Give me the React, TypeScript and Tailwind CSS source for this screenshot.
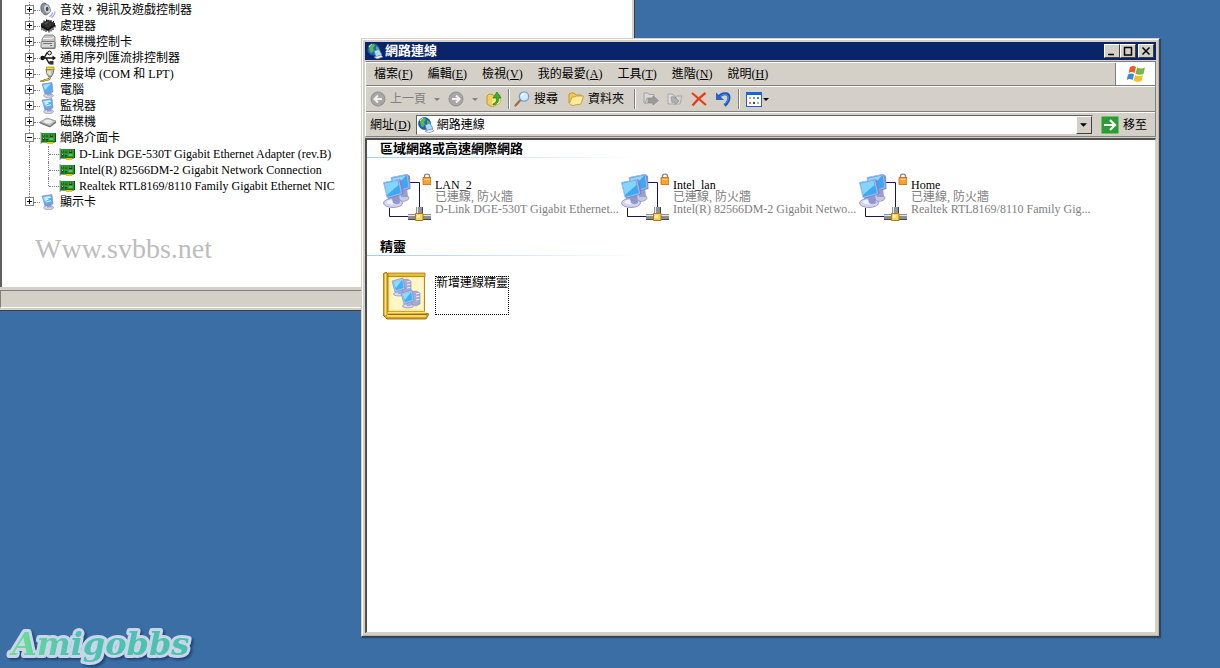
import React from 'react';

type IconProps = { className?: string };

const Svg: React.FC<{ box: string; className?: string; children: React.ReactNode }> = ({ box, className = 'w-4 h-4', children }) => (
  <svg viewBox={box} className={`shrink-0 ${className}`} aria-hidden="true">
    {children}
  </svg>
);

/* ---------- Device tree icons ---------- */

const SpeakerIcon = () => (
  <Svg box="0 0 16 16">
    <ellipse cx="5" cy="7" rx="4" ry="6" fill="#8c8f9c" stroke="#5c5f6e" strokeWidth=".8" transform="rotate(-15 5 7)" />
    <ellipse cx="7" cy="7" rx="3.2" ry="4.6" fill="#d5d7e0" stroke="#777a88" strokeWidth=".8" transform="rotate(-15 7 7)" />
    <ellipse cx="7.2" cy="7" rx="1.4" ry="2.2" fill="#44475a" />
    <path d="M9 14.5c2-.5 3.4-2 3.6-4M11 15.5c2-.7 3.8-2.8 4-6" fill="none" stroke="#9d9ee8" strokeWidth="1.2" />
  </Svg>
);

const ChipIcon = () => (
  <Svg box="0 0 16 16">
    <path d="M1 6l7-4 7 3.500-7 5z" fill="#333" stroke="#000" strokeWidth=".6" />
    <path d="M1 6v3l7 4 7-5V5.500l-7 5z" fill="#111" />
    <path d="M2 9v3M4 10v3M6 11v3M9 12v2.500M11 10.500v3M13 9v3M15 7v2.500M4 4V2.500M6.500 3V1.500M11 3.500V2M13.500 4.500V3" stroke="#000" />
    <path d="M5 6l3-2" stroke="#888" strokeWidth=".7" />
  </Svg>
);

const FloppyIcon = () => (
  <Svg box="0 0 16 16">
    <path d="M2 5l3-4h8l2 2v6l-2 2H2z" fill="#c4c4c4" stroke="#777" strokeWidth=".8" />
    <path d="M3 4.500h9l2-1.500" stroke="#f4f4f4" fill="none" />
    <rect x="1" y="7.500" width="14" height="6.500" rx="1" fill="#d6d6d6" stroke="#666" strokeWidth=".8" />
    <path d="M3 9.500h9" stroke="#777" />
    <path d="M2 14.500h13V9" stroke="#777" fill="none" />
    <rect x="10" y="11" width="2" height="1" fill="#32a032" />
  </Svg>
);

const UsbIcon = () => (
  <Svg box="0 0 16 16">
    <path d="M1 8h13M4 8l3-5h2M6 8l3 5h2" fill="none" stroke="#111" strokeWidth="1.4" />
    <circle cx="2.500" cy="8" r="2.200" fill="#111" />
    <circle cx="9.500" cy="3" r="1.900" fill="#eee" stroke="#111" />
    <rect x="9.500" y="11" width="4" height="3.600" fill="#333" />
    <path d="M12.500 5.500L16 8l-3.500 2.500z" fill="#111" />
  </Svg>
);

const PortIcon = () => (
  <Svg box="0 0 16 16">
    <path d="M6 3h8l-1 5-2 3H9L7 8z" fill="#bdbdbd" stroke="#555" strokeWidth=".8" />
    <path d="M6.500 1h7.500v2.500H6.500z" fill="#f5dc28" stroke="#8d7600" strokeWidth=".6" />
    <path d="M8 5v3M10 5v4" stroke="#fff" />
    <path d="M10 11c0 4-4 2-5 3s-2 1.500-4.500.8" fill="none" stroke="#6e6120" strokeWidth="2" />
    <path d="M10 11c0 4-4 2-5 3s-2 1.500-4.500.8" fill="none" stroke="#e8d46a" />
  </Svg>
);

const MonitorIcon: React.FC<{ pane?: boolean }> = ({ pane }) => (
  <Svg box="0 0 16 16">
    <ellipse cx="8.500" cy="13.600" rx="5" ry="2" fill="#d6d8ea" stroke="#8487a8" strokeWidth=".6" />
    <path d="M7 10h4l1 3.500H7z" fill="#9ea2c6" />
    <path d="M2 2l10-1.500L13 10l-8 2z" fill="#8a9ad6" stroke="#6b7cc0" strokeWidth=".5" />
    <path d="M3 3l8-1.400 1 7.400L5 10.500z" fill="#49b4f6" />
    <path d="M3 3l8-1.400L5 8z" fill="#a8e0ff" />
    {pane && <path d="M5 4.200l6-1M5.500 6l3-.6M6 8l5-1.300" stroke="#e9fbff" />}
  </Svg>
);

const DiskIcon = () => (
  <Svg box="0 0 16 16">
    <path d="M0 8l7-4 9 3-6 5z" fill="#c9c9c9" stroke="#777" strokeWidth=".6" />
    <path d="M0 8l10 4v1.500L0 9.500zM10 12l6-5v2l-6 4.500z" fill="#777" />
    <ellipse cx="8" cy="7.500" rx="4" ry="1.800" fill="#ececec" />
  </Svg>
);

const NicIcon = () => (
  <Svg box="0 0 16 16">
    <path d="M1 3h14v9H1z" fill="#28962c" />
    <path d="M1 2v12" stroke="#9a9a9a" />
    <path d="M1 12h14M15.500 3v9" stroke="#0d5012" />
    <path d="M2.500 4.500h2v2h-2zM2.500 8h2v2.500h-2zM6 4.500h2v2H6zM6 8h2v2.500H6zM10 4h3v3h-3z" fill="#0b3f10" />
    <path d="M3 5h1M6.500 5h1M3 8.500h1M6.500 8.500h1M10.500 5h2M9.500 9h4" stroke="#8ff08a" />
    <path d="M7 12h6v2H7z" fill="#e3c81c" />
  </Svg>
);

/* ---------- Network window icons ---------- */

const GlobeIcon = () => (
  <Svg box="0 0 16 16">
    <circle cx="6.500" cy="6.500" r="6" fill="#1f63c4" stroke="#12408a" strokeWidth=".7" />
    <path d="M2 4c1-2.500 3-3 5-3l1 2-2 2 1 2-2 3-2-1zM9 3l3 2v4l-3-2z" fill="#58b947" />
    <path d="M2 4c1-2 2-2.500 3-2.700" stroke="#d8f4ff" fill="none" />
    <path d="M7 8l5-2 3 6-6 2z" fill="#a8dcff" stroke="#5472a8" strokeWidth=".7" />
    <path d="M7 14l7-2 2 2-6 2z" fill="#e9eaf2" stroke="#777c94" strokeWidth=".6" />
  </Svg>
);

const FlagIcon = () => (
  <Svg box="0 0 20 18" className="w-5 h-[18px]">
    <path d="M4 2c2-1.300 4-1.300 6 0L8.500 8c-2-1.200-4-1.200-6 0z" fill="#ea5a2c" />
    <path d="M11 2.500c2 1.200 5 1.200 8 0L17.500 9c-3 1.200-5.500 1-8-.3z" fill="#77b843" />
    <path d="M2 9.500c2-1.300 4-1.300 6 0L6.700 15c-2-1.200-4-1.200-6 0z" fill="#3f86df" />
    <path d="M9 10c2.500 1.300 5 1.300 8 .3L15.500 16c-3 1.200-5.500 1-8-.5z" fill="#f7c02a" />
  </Svg>
);

const ArrowDisc: React.FC<{ back?: boolean }> = ({ back }) => (
  <Svg box="0 0 16 16">
    <circle cx="8" cy="8" r="7" fill="#a6a6a6" stroke="#8f8f8f" />
    <path d={back ? 'M12 8H5M8 4.500L4.500 8 8 11.500' : 'M4 8h7M8 4.500l3.500 3.500L8 11.500'} fill="none" stroke="#f2f2f2" strokeWidth="2" />
  </Svg>
);

const UpFolderIcon = () => (
  <Svg box="0 0 16 16">
    <path d="M1 5l2-2 4 .5 1 1.500 6-1v8l-8 4-5-3z" fill="#f3cf55" stroke="#b98a1c" strokeWidth=".8" />
    <path d="M6 8l8-3v7l-8 3.500z" fill="#fbe58c" />
    <path d="M7 13c3-1 4-3 3.500-6H7L11 1l4 6h-2.500c.5 4-2 7-5.500 7z" fill="#3eb134" stroke="#1c7a1c" strokeWidth=".7" />
  </Svg>
);

const SearchIcon = () => (
  <Svg box="0 0 16 16">
    <path d="M1.500 14.500L6 9.500" stroke="#a6693f" strokeWidth="2.200" strokeLinecap="round" />
    <circle cx="10" cy="5.500" r="4.700" fill="#d3ecfd" stroke="#6d9ed8" strokeWidth="1.300" />
    <path d="M7.500 5c.3-1.500 1.200-2 2.500-2" stroke="#fff" strokeWidth="1.300" fill="none" />
  </Svg>
);

const FolderIcon = () => (
  <Svg box="0 0 16 16">
    <path d="M1 12V3l2-1h3l2 2h5v3" fill="#f2c94c" stroke="#c2922a" strokeWidth=".9" />
    <path d="M1.500 12.500L4 6h3l1-1h7.500L13 13 4 14.500z" fill="#fdeb9d" stroke="#c79a2c" strokeWidth=".9" />
  </Svg>
);

const MoveIcon = () => (
  <Svg box="0 0 16 16">
    <path d="M1 2h4l1 1.500h5V12H1z" fill="#d9d9d9" stroke="#a2a2a2" />
    <path d="M2 13l2-6h9" fill="none" stroke="#a2a2a2" />
    <path d="M5 7.500h5V5l5.500 4.500L10 14v-2.500H5z" fill="#9a9a9a" stroke="#858585" strokeWidth=".6" />
  </Svg>
);

const CopyIcon = () => (
  <Svg box="0 0 16 16">
    <path d="M1 3h4l4 3v7H1z" fill="#ddd" stroke="#a8a8a8" />
    <path d="M9 5h6l-2 8H8z" fill="#d2d2d2" stroke="#aaa" />
    <path d="M4 6c3-1.500 4 0 4 1.500V6l4 4-4 3.500V11c-1 0-2 0-3 1z" fill="#b0b0b0" stroke="#8d8d8d" strokeWidth=".6" />
  </Svg>
);

const DeleteIcon = () => (
  <Svg box="0 0 16 16">
    <path d="M1 2c5 4 9 8 14 12M14.500 2C9 6 5 10 1.500 14.500" fill="none" stroke="#e63b17" strokeWidth="2.200" />
  </Svg>
);

const UndoIcon = () => (
  <Svg box="0 0 16 16">
    <path d="M3 7C7 1 14 1.500 14 6.500c0 3.500-2 6-4.500 8" fill="none" stroke="#1d56b8" strokeWidth="3" />
    <path d="M3.500 7C7 2.500 13 2 13.500 6.500c0 3-1.500 5-4 7" fill="none" stroke="#4b90ea" />
    <path d="M1 1.500V9h8z" fill="#2565c8" />
  </Svg>
);

const ViewsIcon = () => (
  <Svg box="0 0 16 15" className="w-4 h-[15px]">
    <rect x=".5" y=".5" width="15" height="14" fill="#fff" stroke="#1a63d0" />
    <path d="M0 0h16v3H0z" fill="#1a63d0" />
    <path d="M3 5h2v2H3z" fill="#c8b4a0" />
    <path d="M7 5h2v2H7z" fill="#7b8fd0" />
    <path d="M11 5h2v2h-2z" fill="#3ba83b" />
    <path d="M3 10h2v2H3z" fill="#e27b4d" />
    <path d="M7 10h2v2H7z" fill="#1549a8" />
    <path d="M11 10h2v2h-2z" fill="#e8a93a" />
  </Svg>
);

const GoIcon = () => (
  <Svg box="0 0 18 18" className="w-[18px] h-[18px]">
    <rect x=".5" y=".5" width="17" height="17" rx="1" fill="#2d9c36" stroke="#6cc070" />
    <path d="M3 9h11M9 4l5 5-5 5" fill="none" stroke="#fff" strokeWidth="2.200" />
  </Svg>
);

const Caret: React.FC<IconProps> = ({ className = 'w-1.5 h-[3px]' }) => (
  <Svg box="0 0 6 3" className={className}>
    <path d="M0 0h6L3 3z" fill="currentColor" />
  </Svg>
);

const LanIcon = () => (
  <Svg box="0 0 48 48" className="w-12 h-12">
    <path d="M26 9.500h10.500V35M6.500 35v8.500H26" fill="none" stroke="#1c1060" />
    {/* rear monitor */}
    <ellipse cx="19" cy="25" rx="7" ry="3.500" fill="#c6c9e6" stroke="#777ba8" strokeWidth=".6" />
    <path d="M17 16l7-2 1 10h-7z" fill="#9a9ecf" />
    <path d="M8 4.500L24 1l3 2 .5 13L12 20z" fill="#7f8fd2" />
    <path d="M8 4.500L24 1.500l2 13L12 19z" fill="#3ea6f2" stroke="#a9b6e6" />
    <path d="M9 5.500L23 2.500 13 14z" fill="#90d6ff" />
    {/* front monitor */}
    <ellipse cx="10" cy="30" rx="9.500" ry="4.500" fill="#d3d5ee" stroke="#7a7eaa" strokeWidth=".7" />
    <ellipse cx="9" cy="29" rx="5.500" ry="2.200" fill="#f0f1fb" />
    <path d="M8 22l8-2 1 10c-2 1.500-5 1.500-7 0z" fill="#9296cc" />
    <path d="M.5 9.500L16 6l3 2 1.500 13L5 26z" fill="#7787d0" />
    <path d="M.5 9.500L15.500 6.500 18.500 20.500 4 24.500z" fill="#3aaaf5" stroke="#b1bdea" />
    <path d="M1.500 10.500L14.500 7.500 15.500 12 4 22z" fill="#84d4ff" />
    {/* cable */}
    <path d="M25 41h23v6H25z" fill="#8b8f94" />
    <path d="M25 42.500h23" stroke="#e4e6e8" />
    <path d="M25 46.500h23" stroke="#45484c" />
    <path d="M33 34h7v7h-7z" fill="#909498" />
    <path d="M34.500 34v7" stroke="#e8e8e8" />
    <path d="M39.500 34v7" stroke="#44474a" />
    <path d="M32.500 40.500h7.500v7h-7.500z" fill="#ffd553" stroke="#a87b12" />
    <path d="M34 42h3v3h-3z" fill="#fff3b5" />
    {/* lock */}
    <path d="M41.500 5V3c0-2.500 5-2.500 5 0v2" fill="none" stroke="#85858a" strokeWidth="1.400" />
    <path d="M40 4.500h8v7h-8z" fill="#f9a234" stroke="#bd6a10" strokeWidth=".8" />
    <path d="M41.500 6.500h5" stroke="#ffd795" />
  </Svg>
);

const MiniPc: React.FC<{ x: number; y: number }> = ({ x, y }) => (
  <g transform={`translate(${x} ${y})`}>
    <path d="M11 2l5-1 4 2v11l-4 2-5-2z" fill="#a7abd0" stroke="#8387b2" strokeWidth=".6" />
    <path d="M16 4l3.500-.8M16 7l3.500-.8M16 10l3.500-.8" stroke="#eceefb" />
    <ellipse cx="8" cy="16" rx="5.500" ry="2" fill="#d5d8ee" stroke="#7c80aa" strokeWidth=".6" />
    <path d="M6 12l5-1v5H7z" fill="#a7abd8" />
    <path d="M1 3l11-3 2 11-10 3z" fill="#b4c3ee" stroke="#7f8fce" strokeWidth=".7" />
    <path d="M2.300 4l8.800-2.300L12.600 10 5 12.200z" fill="#39b4fa" />
    <path d="M2.300 4l8.800-2.300L5 10z" fill="#8fdcff" />
  </g>
);

const WizardIcon = () => (
  <Svg box="0 0 46 48" className="w-[46px] h-12">
    <path d="M0 2l3-2 2 2v38l37 1 4 1-3 5H4l-4-4z" fill="#d9a21b" stroke="#8c6208" strokeWidth=".8" />
    <path d="M5 1h37v4H5z" fill="#e9bd38" stroke="#a87b12" strokeWidth=".8" />
    <path d="M5 4.500h36.500v35H5z" fill="#fbeb9c" stroke="#b88a1a" />
    <path d="M7 6h33v31H7z" fill="#fff6c8" />
    <path d="M2.500 2v41" stroke="#ffe98a" strokeWidth="1.500" />
    <path d="M5 40.500h38M4 44h39" stroke="#ffe682" strokeWidth="1.500" />
    <path d="M5 42.500h39" stroke="#9b6f0c" />
    <MiniPc x={8} y={6} />
    <MiniPc x={17} y={18} />
  </Svg>
);

/* ---------- Device manager ---------- */

const DEVICES: { label: string; icon: React.ReactNode; children?: string[] }[] = [
  { label: '音效，視訊及遊戲控制器', icon: <SpeakerIcon /> },
  { label: '處理器', icon: <ChipIcon /> },
  { label: '軟碟機控制卡', icon: <FloppyIcon /> },
  { label: '通用序列匯流排控制器', icon: <UsbIcon /> },
  { label: '連接埠 (COM 和 LPT)', icon: <PortIcon /> },
  { label: '電腦', icon: <MonitorIcon /> },
  { label: '監視器', icon: <MonitorIcon pane /> },
  { label: '磁碟機', icon: <DiskIcon /> },
  {
    label: '網路介面卡',
    icon: <NicIcon />,
    children: [
      'D-Link DGE-530T Gigabit Ethernet Adapter (rev.B)',
      'Intel(R) 82566DM-2 Gigabit Network Connection',
      'Realtek RTL8169/8110 Family Gigabit Ethernet NIC',
    ],
  },
  { label: '顯示卡', icon: <MonitorIcon pane /> },
];

const DeviceTree = () => (
  <ul className="pl-[23px] pt-0.5">
    {DEVICES.map((d, i) => (
      <li key={d.label}>
        <div className="flex h-4 items-center">
          <div className="flex h-4 w-[9px] flex-col items-center">
            <span className="h-[3px] border-l border-dotted border-[#808080]" />
            <button
              aria-label={d.children ? '收合' : '展開'}
              className="flex h-[9px] w-[9px] items-center justify-center border border-[#808080] bg-white"
            >
              <Svg box="0 0 5 5" className="w-[5px] h-[5px]">
                <path d={d.children ? 'M0 2.500h5' : 'M0 2.500h5M2.500 0v5'} stroke="#000" />
              </Svg>
            </button>
            {i < DEVICES.length - 1 && <span className="h-1 border-l border-dotted border-[#808080]" />}
          </div>
          <span className="w-1.5 border-t border-dotted border-[#808080]" />
          {d.icon}
          <span className="ml-1 whitespace-nowrap">{d.label}</span>
        </div>
        {d.children && (
          <ul>
            {d.children.map((c, n) => (
              <li key={c} className="flex h-4 items-center">
                <span className="ml-1 h-4 w-[19px] border-l border-dotted border-[#808080]" />
                <span className={`w-px self-start border-l border-dotted border-[#808080] ${n === d.children!.length - 1 ? 'h-2' : 'h-4'}`} />
                <span className="w-2.5 border-t border-dotted border-[#808080]" />
                <NicIcon />
                <span className="ml-1 whitespace-nowrap">{c}</span>
              </li>
            ))}
          </ul>
        )}
      </li>
    ))}
  </ul>
);

const DeviceManager = () => (
  <section className="absolute left-0 top-0 flex w-[635px] flex-col border-b border-r border-[#404040] bg-[#d4d0c8] pb-0.5 pr-0.5">
    <div className="flex flex-col border-l-2 border-r border-[#606060] border-r-white bg-white pb-6">
      <DeviceTree />
      <p className="mt-[25px] pl-[33px] text-[28px] leading-7 text-[#bdbdbd]">Www.svbbs.net</p>
    </div>
    <div className="mt-[3px] h-[18px] border border-[#808080] border-b-white border-r-white" />
  </section>
);

/* ---------- Network connections ---------- */

const MENUS = [
  ['檔案', 'F'],
  ['編輯', 'E'],
  ['檢視', 'V'],
  ['我的最愛', 'A'],
  ['工具', 'T'],
  ['進階', 'N'],
  ['說明', 'H'],
];

const CONNECTIONS = [
  { name: 'LAN_2', device: 'D-Link DGE-530T Gigabit Ethernet...' },
  { name: 'Intel_lan', device: 'Intel(R) 82566DM-2 Gigabit Netwo...' },
  { name: 'Home', device: 'Realtek RTL8169/8110 Family Gig...' },
];

const CaptionButton: React.FC<{ label: string; d: string; className?: string }> = ({ label, d, className = '' }) => (
  <button
    aria-label={label}
    className={`flex h-3.5 w-4 items-center justify-center border border-white border-b-[#404040] border-r-[#404040] bg-[#d4d0c8] ${className}`}
  >
    <Svg box="0 0 10 10" className="w-2.5 h-2.5">
      <path d={d} fill="none" stroke="#000" strokeWidth="1.500" />
    </Svg>
  </button>
);

const Separator = () => <span className="h-5 w-0.5 border-l border-r border-l-[#808080] border-r-white" />;

const GroupHeading: React.FC<{ children: React.ReactNode }> = ({ children }) => (
  <>
    <h2 className="pl-[13px] text-[13px] font-bold leading-[17px]">{children}</h2>
    <div className="h-px w-[270px] bg-linear-to-r from-[#a9c8f5] to-white" />
  </>
);

const Toolbar = () => (
  <div className="flex h-[26px] items-center border-b border-t border-b-[#808080] border-t-white pl-1">
    <button className="flex items-center gap-1 text-[#808080]">
      <ArrowDisc back />
      上一頁
    </button>
    <button aria-label="上一頁清單" className="ml-2 text-[#808080]"><Caret /></button>
    <button aria-label="下一頁" className="ml-2"><ArrowDisc /></button>
    <button aria-label="下一頁清單" className="ml-2 text-[#808080]"><Caret /></button>
    <button aria-label="上移一層" className="ml-2 mr-1.5"><UpFolderIcon /></button>
    <Separator />
    <button className="ml-1 flex items-center gap-1">
      <SearchIcon />
      搜尋
    </button>
    <button className="ml-2.5 mr-2.5 flex items-center gap-1">
      <FolderIcon />
      資料夾
    </button>
    <Separator />
    <div className="mx-[7px] flex gap-2">
      <button aria-label="移至"><MoveIcon /></button>
      <button aria-label="複製到"><CopyIcon /></button>
      <button aria-label="刪除"><DeleteIcon /></button>
      <button aria-label="復原"><UndoIcon /></button>
    </div>
    <Separator />
    <button aria-label="檢視模式" className="ml-1.5 flex items-center gap-px">
      <ViewsIcon />
      <Caret />
    </button>
  </div>
);

const NetworkWindow = () => (
  <section className="absolute bottom-[31px] left-[361px] right-[60px] top-[38px] flex flex-col border border-[#d4d0c8] border-b-[#404040] border-r-[#404040] bg-[#d4d0c8] shadow-[1px_1px_1px_rgba(0,0,0,0.35)]">
    <div className="flex min-h-0 flex-1 flex-col border border-white border-b-[#b8b4ac] border-r-[#b8b4ac] p-0.5">
      <header className="flex h-[18px] items-center bg-[#0a246a] pl-0.5 pr-0.5 text-white">
        <GlobeIcon />
        <h1 className="ml-0.5 flex-1 text-[13px] font-bold leading-4">網路連線</h1>
        <CaptionButton label="最小化" d="M1 8.500h6" />
        <CaptionButton label="最大化" d="M1 1.500h8M1.500 1v8h7V1" />
        <CaptionButton label="關閉" d="M1.500 1.500l7 7M8.500 1.500l-7 7" className="ml-0.5" />
      </header>

      <div className="mt-px flex flex-col border border-[#808080] border-l-white">
        <nav className="flex h-6 border-b border-t border-b-[#808080] border-t-white">
          {MENUS.map(([text, key]) => (
            <button key={key} className="whitespace-nowrap pl-2 pr-[7px] leading-[22px]">
              {text}(<u>{key}</u>)
            </button>
          ))}
          <span className="ml-auto flex w-10 items-center justify-center border-l border-[#808080] bg-white">
            <FlagIcon />
          </span>
        </nav>
        <Toolbar />
        <form className="flex h-6 items-center border-t border-white pl-1 pr-2" onSubmit={(e) => e.preventDefault()}>
          <label htmlFor="address" className="whitespace-nowrap">
            網址(<u>D</u>)
          </label>
          <div className="ml-[5px] flex h-5 flex-1 items-center border border-[#606060] border-b-[#d4d0c8] border-r-[#d4d0c8] bg-white pl-px">
            <GlobeIcon />
            <input id="address" defaultValue="網路連線" className="ml-[3px] min-w-0 flex-1 outline-none" />
            <button
              type="button"
              aria-label="網址清單"
              className="flex h-[18px] w-4 items-center justify-center border border-white border-b-[#404040] border-r-[#404040] bg-[#d4d0c8]"
            >
              <Caret className="w-[7px] h-1" />
            </button>
          </div>
          <button className="ml-2 flex items-center gap-1">
            <GoIcon />
            移至
          </button>
        </form>
      </div>

      <main className="mt-px min-h-0 flex-1 overflow-hidden border border-l-2 border-t-2 border-[#505050] border-b-[#d4d0c8] border-r-[#d4d0c8] bg-white">
        <GroupHeading>區域網路或高速網際網路</GroupHeading>
        <ul className="flex flex-wrap pb-[17px] pl-4 pt-[15px]">
          {CONNECTIONS.map((c) => (
            <li key={c.name} className="flex w-[238px] gap-1">
              <LanIcon />
              <div className="whitespace-nowrap pt-1.5 leading-3 text-[#808080]">
                <p className="text-black">{c.name}</p>
                <p>已連線, 防火牆</p>
                <p>{c.device}</p>
              </div>
            </li>
          ))}
        </ul>
        <GroupHeading>精靈</GroupHeading>
        <div className="flex gap-1.5 pl-4 pt-4">
          <WizardIcon />
          <button className="mt-1 flex h-[39px] w-[74px] justify-center whitespace-nowrap border border-dotted border-black leading-3">
            新增連線精靈
          </button>
        </div>
      </main>
    </div>
  </section>
);

const Logo = () => (
  <svg viewBox="0 0 200 48" className="absolute bottom-0 left-0 h-12 w-[200px] drop-shadow-[2px_2px_1px_rgba(20,40,90,0.6)]">
    <defs>
      <linearGradient id="mint" x1="0" x2="1" y1="0" y2="0">
        <stop offset="0" stopColor="#6fe090" />
        <stop offset=".35" stopColor="#4fc3b4" />
        <stop offset="1" stopColor="#4dbfae" />
      </linearGradient>
    </defs>
    <text
      x="12"
      y="35"
      fill="url(#mint)"
      stroke="#c9d5e8"
      strokeWidth="6"
      strokeLinejoin="round"
      paintOrder="stroke"
      className="font-['DejaVu_Serif',serif] text-[32px] font-bold italic"
    >
      Amigobbs
    </text>
  </svg>
);

export default function App() {
  return (
    <div className="relative h-screen overflow-hidden bg-[#3a6ea5] font-['Liberation_Serif','Noto_Sans_CJK_TC',serif] text-xs text-black">
      <DeviceManager />
      <NetworkWindow />
      <Logo />
    </div>
  );
}
